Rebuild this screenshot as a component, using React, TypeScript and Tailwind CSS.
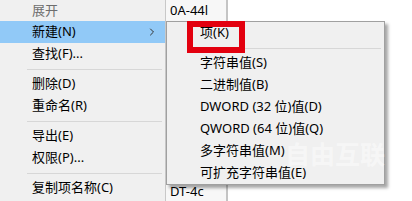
import { ChevronRight } from 'lucide-react';

const font = "font-['Noto_Sans','Noto_Sans_CJK_SC',sans-serif]";

type Entry = { label?: string; sep?: boolean; disabled?: boolean; active?: boolean; sub?: boolean };

const mainItems: Entry[] = [
  { label: '展开', disabled: true },
  { label: '新建(N)', active: true, sub: true },
  { label: '查找(F)...' },
  { sep: true },
  { label: '删除(D)' },
  { label: '重命名(R)' },
  { sep: true },
  { label: '导出(E)' },
  { label: '权限(P)...' },
  { sep: true },
  { label: '复制项名称(C)' },
];

const subItems: Entry[] = [
  { label: '项(K)' },
  { sep: true },
  { label: '字符串值(S)' },
  { label: '二进制值(B)' },
  { label: 'DWORD (32 位)值(D)' },
  { label: 'QWORD (64 位)值(Q)' },
  { label: '多字符串值(M)' },
  { label: '可扩充字符串值(E)' },
];

function Separator({ left }: { left: string }) {
  return (
    <div className={`h-2 flex items-center ${left} pr-[3px]`}>
      <div className="h-px w-full bg-[#d7d7d7]" />
    </div>
  );
}

export default function App() {
  return (
    <div className={`relative w-[412px] h-[201px] overflow-hidden bg-white text-[13px] text-black ${font}`}>
      <div className="flex h-full">
        {/* main context menu */}
        <div className="w-[166px] shrink-0 bg-[#f0f0f0] border-r border-[#c8c8c8] flex flex-col">
          {mainItems.map((it, i) =>
            it.sep ? (
              <Separator key={i} left="pl-[27px]" />
            ) : (
              <div
                key={i}
                className={`flex items-center justify-between pl-[32px] pr-[7px] shrink-0 ${i === 0 ? 'h-[21px]' : 'h-[22px]'} ${
                  it.active ? 'bg-[#91c9f7]' : ''
                } ${it.disabled ? 'text-[#6d6d6d]' : ''}`}
              >
                <span>{it.label}</span>
                {it.sub && <ChevronRight className="w-3 h-3 text-[#333]" strokeWidth={2} />}
              </div>
            )
          )}
        </div>

        {/* column of the list behind the menus */}
        <div className="w-[62px] shrink-0 bg-[#f7f7f7] border-r-[2px] border-[#c4c4c4] flex flex-col justify-between overflow-hidden pl-[4px]">
          <span className="leading-[20px] whitespace-nowrap">0A-44l</span>
          <span className="leading-[20px] whitespace-nowrap">DT-4c</span>
        </div>
        <div className="flex-1 bg-white" />
      </div>

      {/* submenu */}
      <div className="absolute left-[166px] top-[21px] w-[219px] bg-[#f0f0f0] border border-[#a0a0a0] shadow-[3px_3px_3px_rgba(0,0,0,0.35)] flex flex-col">
        {subItems.map((it, i) =>
          it.sep ? (
            <Separator key={i} left="pl-[30px]" />
          ) : (
            <div key={i} className="h-[22px] flex items-center pl-[33px] whitespace-nowrap">
              {it.label}
            </div>
          )
        )}
        {/* watermark */}
        <div className="absolute left-[118px] top-[120px] text-[25px] font-bold text-white/45 whitespace-nowrap leading-none">
          自由互联
        </div>
      </div>

      {/* red highlight frame */}
      <div className="absolute left-[187px] top-[21px] w-[58px] h-[32px] border-[6px] border-[#e3000f]" />
    </div>
  );
}
